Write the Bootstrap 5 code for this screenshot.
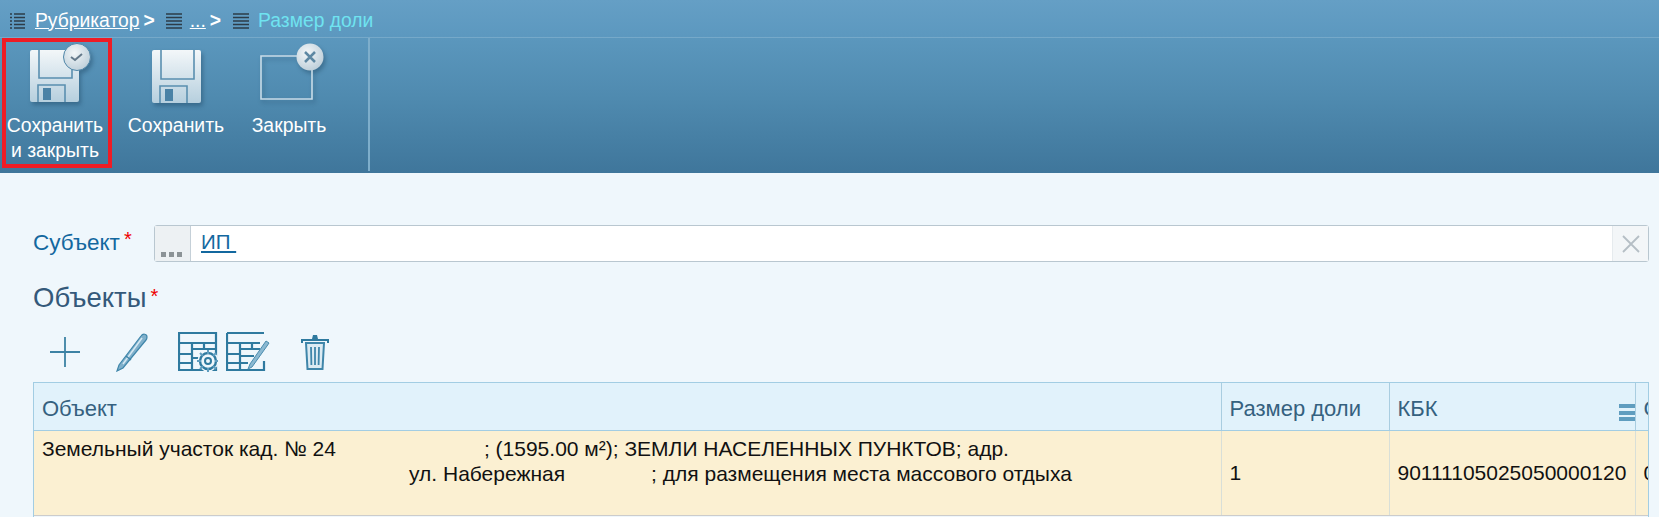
<!DOCTYPE html>
<html lang="ru"><head><meta charset="utf-8"><title>Размер доли</title>
<link href="https://cdn.jsdelivr.net/npm/bootstrap@5.3.0/dist/css/bootstrap.min.css" rel="stylesheet">
<style>
html,body{height:517px;overflow:hidden}
body{background:#eff7fc;font-family:"Liberation Sans",Arial,sans-serif;color:#111;width:1659px}
.crumbs{height:38px;background:linear-gradient(#659fc5,#5c98bf);border-bottom:1px solid #76a9c9;color:#fff;font-size:19.3px;padding:5px 0 0 10px}
.crumbs a{color:#fff}
.crumbs svg{display:block;flex:none}
.crumb-cur{color:#6fe3f0}
.mr-a{margin-left:10px}.mr-b{margin-left:4px}.mr-c{margin-left:11px}.mr-d{margin-left:8px}.mr-e{margin-left:12px}.mr-f{margin-left:9px}
.tools{height:135px;background:linear-gradient(#5b97bd,#4f8aaf 45%,#3f769b);color:#fff;font-size:19.4px;line-height:25px}
.tools svg{display:block;filter:drop-shadow(2px 3px 2px rgba(30,70,100,.45))}
.tool{width:110px;height:130px;margin-left:2px;padding:1px 4px 0 0;text-align:center;border:4px solid transparent;flex:none}
.tool svg{margin:0 0 10px 24px}
.tool-on{border-color:#ee1c25}
.tool-b{width:100px;margin-left:14px;padding-top:5px;text-align:center;flex:none}
.tool-b svg{margin:7px auto 10px}
.tool-c{width:100px;margin-left:13px;padding-top:5px;text-align:center;flex:none}
.tool-c svg{margin:0 auto 10px}
.tool-sep{width:2px;height:133px;margin-left:29px;background:#7eaecb}
.main{padding:52px 10px 0 33px}
.subj-lbl{color:#13689f;font-size:22.500px;width:121px;padding-bottom:2px}
.req{color:#e00;font-size:20px;margin-left:4px;vertical-align:4px;line-height:0}
.pick{height:37px;background:#fff;border:1px solid #b9c7d0;border-radius:3px;flex:1}
.pick-b{width:36px;background:#edf1f3;border-right:1px solid #c5d0d8;position:relative}
.pick-d{font-size:0;display:flex;gap:3px;position:absolute;left:6px;bottom:4px}
.pick-d i{width:5px;height:5px;background:#8c9396;display:block}
.pick-v{color:#13689f;font-size:20.500px;padding:0 0 3px 10px;text-decoration:underline}
.pick-x{width:36px;background:#f3f6f8;border-left:1px solid #e6ebee}
.sect{color:#34597a;font-size:27.500px;line-height:28px;margin-top:22px}
.acts{height:54px;margin-top:13px;padding-left:17px}
.acts svg{display:block;flex:none}
.ai-b{margin-left:36px}.ai-c{margin-left:30px}.ai-d{margin-left:8px}.ai-e{margin-left:31px}
.grid{width:1616px;overflow:hidden;border:1px solid #a2cde3;border-bottom:0;margin-top:3px;height:135px}
.grid table{table-layout:fixed;width:1640px;border-collapse:collapse;font-size:21px;line-height:25px}
.grid th{height:47px;font-weight:400;font-size:22px;color:#35617f;background:#e1f2fb;border-right:1px solid #a9cde0;border-bottom:1px solid #a2cde3;padding:5px 8px 0;white-space:nowrap;position:relative}
.grid td{height:85px;background:#fbf0d2;border-right:1px solid #d8dfd8;border-bottom:1px solid #ccc;padding:0 8px;vertical-align:middle;white-space:nowrap}
.grid td.obj{vertical-align:top;padding-top:5px}
.gap1{display:inline-block;width:148px}
.ind{display:inline-block;width:367px}
.gap2{display:inline-block;width:86px}
.col-menu{position:absolute;right:0;top:21px;width:16px;height:17px;display:flex;flex-direction:column;justify-content:space-between}
.col-menu i{display:block;height:4px;background:#5f9dbf}
</style></head><body>
<div class="crumbs d-flex align-items-center">
<svg width="15" height="18" viewBox="0 0 15 18"><path d="M0 2h2M4 2h11M0 5.500h2M4 5.500h11M0 9h2M4 9h11M0 12.500h2M4 12.500h11M0 16h2M4 16h11" stroke="#2d3c48" stroke-width="1.500"/></svg>
<a href="#" class="mr-a">Рубрикатор</a><b class="mr-b">&gt;</b>
<svg class="mr-c" width="16" height="18" viewBox="0 0 16 18"><path d="M0 2h16M0 5.500h16M0 9h16M0 12.500h16M0 16h16" stroke="#2d3c48" stroke-width="1.500"/></svg>
<a href="#" class="mr-d">...</a><b class="mr-b">&gt;</b>
<svg class="mr-e" width="16" height="18" viewBox="0 0 16 18"><path d="M0 2h16M0 5.500h16M0 9h16M0 12.500h16M0 16h16" stroke="#2d3c48" stroke-width="1.500"/></svg>
<span class="crumb-cur mr-f">Размер доли</span>
</div>
<div class="tools d-flex align-items-start">
<div class="tool tool-on">
<svg width="62" height="60" viewBox="0 0 62 60"><defs><linearGradient id="fb" x1="0" y1="0" x2="0" y2="1"><stop offset="0" stop-color="#f3f7f9"/><stop offset="1" stop-color="#b6cfde"/></linearGradient><radialGradient id="cr" cx=".4" cy=".35" r=".8"><stop offset="0" stop-color="#f2f6f8"/><stop offset="1" stop-color="#b5c8d4"/></radialGradient></defs>
<path d="M2 7h45q2 0 2 2v48q0 2-2 2H2q-2 0-2-2V9q0-2 2-2z" fill="url(#fb)"/><path d="M9 7v28h33V7" fill="none" stroke="#5a8fb0" stroke-width="1.600"/><path d="M8 59V42h27v17" fill="none" stroke="#5a8fb0" stroke-width="1.600"/><path d="M13 45h8v12h-8z" fill="#4a82a6"/>
<circle cx="47" cy="14" r="13.500" fill="url(#cr)" stroke="#4f86a8"/><path d="M41 14l4 3 7-6" fill="none" stroke="#64798a" stroke-width="2"/></svg>
Сохранить<br>и закрыть</div>
<div class="tool-b">
<svg width="49" height="53" viewBox="0 0 49 53"><path d="M2 0h45q2 0 2 2v49q0 2-2 2H2q-2 0-2-2V2q0-2 2-2z" fill="url(#fb)"/><path d="M9 0v29h33V0" fill="none" stroke="#5a8fb0" stroke-width="1.600"/><path d="M8 53V36h27v17" fill="none" stroke="#5a8fb0" stroke-width="1.600"/><path d="M13 39h8v12h-8z" fill="#4a82a6"/></svg>
Сохранить</div>
<div class="tool-c">
<svg width="70" height="60" viewBox="0 0 70 60"><path d="M7 13h51v43H7z" fill="none" stroke="#c9dce8" stroke-width="1.600"/><circle cx="56" cy="14" r="13.500" fill="url(#cr)"/><path d="M51 9l10 10M61 9L51 19" stroke="#5e88a3" stroke-width="2.500"/></svg>
Закрыть</div>
<div class="tool-sep"></div>
</div>
<div class="main">
<div class="d-flex align-items-center">
<div class="subj-lbl">Субъект<span class="req">*</span></div>
<div class="pick d-flex align-items-stretch">
<div class="pick-b"><div class="pick-d"><i></i><i></i><i></i></div></div>
<div class="pick-v flex-grow-1 d-flex align-items-center"><span>ИП&nbsp;</span></div>
<div class="pick-x d-flex align-items-center justify-content-center"><svg width="18" height="18" viewBox="0 0 18 18"><path d="M1 1l16 16M17 1L1 17" stroke="#b5bec5" stroke-width="1.800"/></svg></div>
</div>
</div>
<div class="sect">Объекты<span class="req">*</span></div>
<div class="acts d-flex align-items-center">
<svg width="30" height="30" viewBox="0 0 30 30"><path d="M0 15h30M15 0v30" stroke="#3c82a4" stroke-width="1.800"/></svg>
<svg class="ai-b" width="32" height="40" viewBox="0 0 32 40"><path d="M1 39L3 33 25 4c2-3 6-2 6 1 0 1 0 2-1 3L7 36z" fill="#7fb0cb" stroke="#3f86aa" stroke-width="1.200"/><path d="M26 6L7 32" stroke="#d5e8f2" stroke-width="1.500"/><path d="M10 24l5 4" stroke="#3f86aa" stroke-width="1.400"/></svg>
<svg class="ai-c" width="40" height="40" viewBox="0 0 40 40"><path d="M1 1h37v37H1zM1 11h37M14 11v27M1 22h13M1 31h13M14 17h24M26 11v6M14 26h8" fill="none" stroke="#2f7a9f" stroke-width="2.200"/><circle cx="30" cy="29" r="10.500" fill="#eff7fc"/><circle cx="30" cy="29" r="8" fill="none" stroke="#2f7a9f" stroke-width="2.400"/><circle cx="30" cy="29" r="3" fill="none" stroke="#2f7a9f" stroke-width="2"/><path d="M30 18v4M30 36v4M19 29h4M37 29h3M22 21l3 3M35 34l3 3M38 21l-3 3M25 34l-3 3" stroke="#5f9dbf" stroke-width="2"/></svg>
<svg class="ai-d" width="44" height="40" viewBox="0 0 44 40"><path d="M1 1h37M1 1v37h37v-9M1 11h33M14 11v27M1 22h13M1 31h13M14 17h20M26 11v6M14 24h14M14 31h8" fill="none" stroke="#2f7a9f" stroke-width="2.200"/><path d="M22 37l2-5L40 9l3 2-2 3-15 21z" fill="#8bb9d2" stroke="#4a8cae"/></svg>
<svg class="ai-e" width="28" height="37" viewBox="0 0 28 37"><path d="M1 9V6h26v3" fill="none" stroke="#2f7a9f" stroke-width="2"/><path d="M11 5l1-4h4l1 4z" fill="#2f7a9f"/><path d="M5 9h18l-1.500 26H6.500z" fill="#dcebf3" stroke="#3f86aa" stroke-width="2"/><path d="M10 13l.4 18M14 13v18M18 13l-.4 18" stroke="#3f86aa" stroke-width="1.800"/></svg>
</div>
<div class="grid">
<table>
<colgroup><col style="width:1187px"><col style="width:168px"><col style="width:246px"><col style="width:39px"></colgroup>
<thead><tr><th>Объект</th><th>Размер доли</th><th>КБК<span class="col-menu"><i></i><i></i><i></i></span></th><th>С</th></tr></thead>
<tbody><tr>
<td class="obj">Земельный участок кад. № 24<span class="gap1"></span>; (1595.00 м²); ЗЕМЛИ НАСЕЛЕННЫХ ПУНКТОВ; адр.<br><span class="ind"></span>ул. Набережная<span class="gap2"></span>; для размещения места массового отдыха</td>
<td>1</td><td>90111105025050000120</td><td>0</td>
</tr></tbody></table>
</div>
</div>
<script src="https://cdn.jsdelivr.net/npm/bootstrap@5.3.0/dist/js/bootstrap.bundle.min.js"></script>
</body></html>
